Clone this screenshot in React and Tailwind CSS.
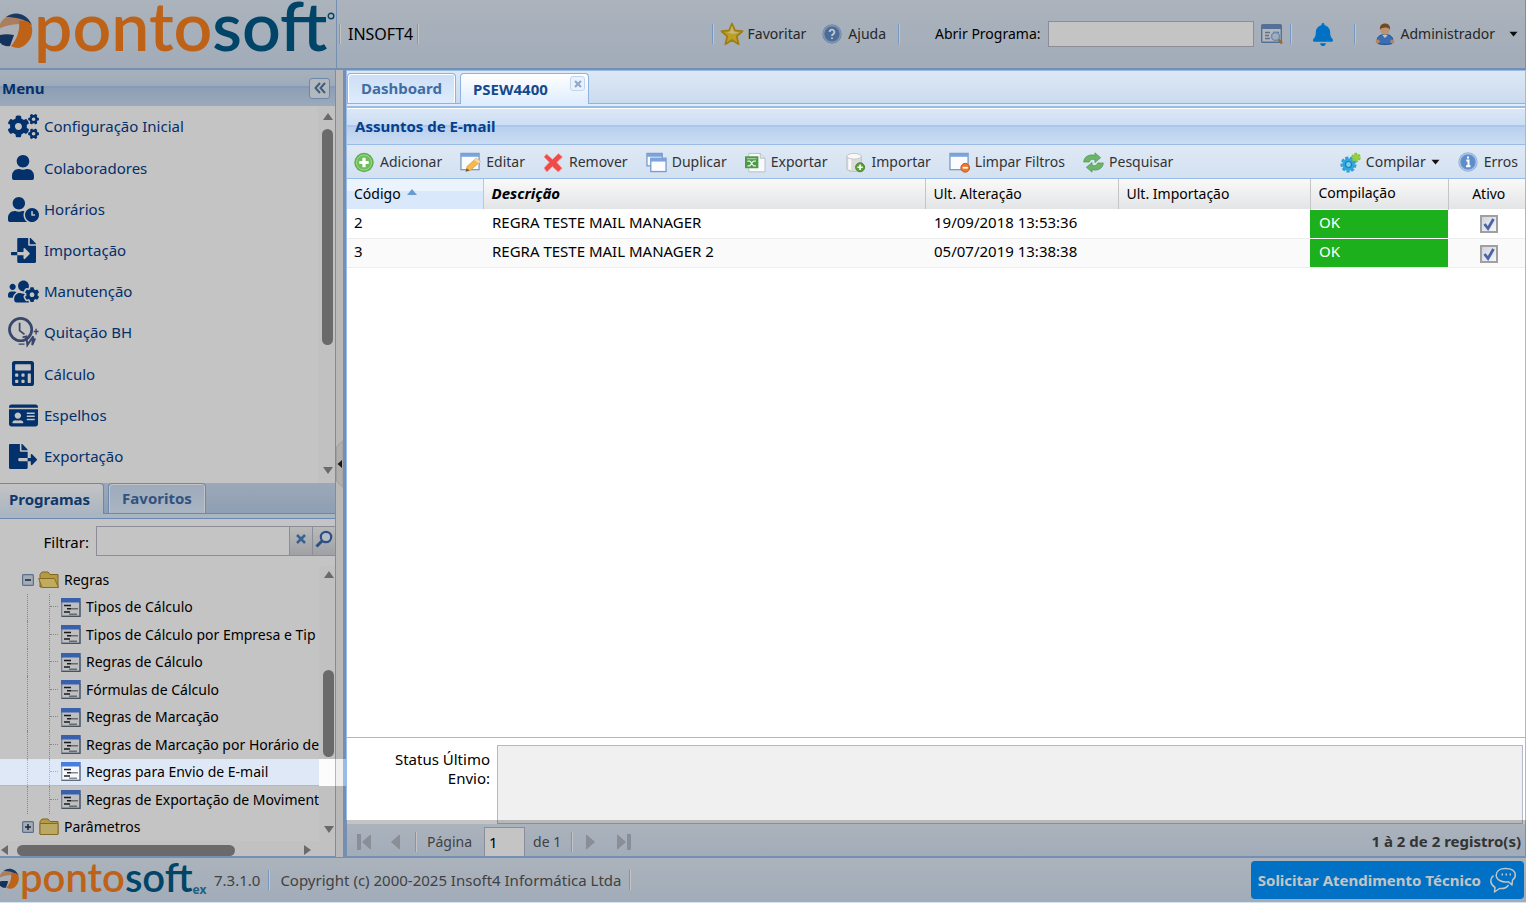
import { FaBell, FaCalculator, FaCogs, FaFileExport, FaFileImport, FaIdCard, FaUser, FaUserClock, FaUsersCog } from "react-icons/fa";

/* ---------- brand ---------- */

function Ball({ className }) {
  return (
    <svg viewBox="0 0 34 38" className={className} aria-hidden="true">
      <ellipse cx="14" cy="19" rx="17.500" ry="18" fill="#dfe4ec" />
      <path d="M-2 17C0 9 6 4 12 3c9-1 17 3 19 10C21 11 9 12-2 17z" fill="#dfa67a" />
      <path d="M6 5C14-1 26 0 32 13 25 7 15 5 6 5z" fill="#234a80" />
      <path d="M19 9c5-1 10 0 12 3 4 10-2 21-12 24-4 0-6-1-8-2 6-7 9-15 8-25z" fill="#f7801f" />
      <path d="M-3 24c5-2 11-2 17-1l-4 11C4 35-1 32-3 24z" fill="#1c4279" />
    </svg>
  );
}

/* ---------- menu icons ---------- */

function ClockSign({ className }) {
  return (
    <svg viewBox="0 0 32 32" className={className} fill="none" stroke="#4a5c8c" aria-hidden="true">
      <circle cx="13" cy="13" r="11.500" strokeWidth="2.800" />
      <path d="M12 6v8l5 4" strokeWidth="1.800" />
      <path d="M15 21l4-1 1 9 6-9-1 9 3-7" strokeWidth="2" />
      <path d="M11 28h6M29 12v6M26.500 15h5" strokeWidth="1.400" />
    </svg>
  );
}

/* ---------- coloured icons ---------- */

function Star() {
  return (
    <svg viewBox="0 0 24 24" className="size-6" aria-hidden="true">
      <path d="M12 1.500l3 7 7.500.700-5.700 5 1.800 8L12 18l-6.600 4.200 1.800-8-5.700-5L9 8.500z" fill="#f6cf2e" stroke="#cfa41c" strokeWidth="1.800" strokeLinejoin="round" />
      <path d="M12 4l2 5.500 5 .700-6 2-6-2 3-.700z" fill="#fdf0a0" />
    </svg>
  );
}

function RoundBadge({ glyph }) {
  return (
    <svg viewBox="0 0 20 20" className="size-5" aria-hidden="true">
      <circle cx="10" cy="10" r="9.700" fill="#8fb0dc" />
      <circle cx="10" cy="10" r="8.300" fill="#6c97cf" stroke="#bdd3ee" strokeWidth=".9" />
      <circle cx="10" cy="10" r="6.800" fill="#5f8dc8" />
      {glyph === "help" ? (
        <path d="M7.600 8a2.400 2.400 0 1 1 3.600 2.100c-.900.500-1.200.900-1.200 1.900M10 13.500v1.600" fill="none" stroke="#fff" strokeWidth="1.900" />
      ) : (
        <path d="M10 4.500v2M8.300 8.500H10.500V14M8 14.300h4.500" fill="none" stroke="#fff" strokeWidth="2" />
      )}
    </svg>
  );
}

function WindowSearch() {
  return (
    <svg viewBox="0 0 23 22" className="h-[22px] w-[23px]" aria-hidden="true">
      <rect x=".7" y="1.700" width="19.600" height="17.600" rx="1" fill="#e9f0f9" stroke="#6d94c4" strokeWidth="1.400" />
      <path d="M1 2h19v4H1z" fill="#6d94c4" />
      <path d="M4 9.500h5M4 12.500h4M4 15.500h5M12 9.500h6" stroke="#7d93b0" strokeWidth="1.300" />
      <circle cx="14.500" cy="13.500" r="4" fill="#cfe3f8" stroke="#8fb4e0" strokeWidth="1.500" />
      <path d="M17.500 16.500l3.500 4" stroke="#c08a4c" strokeWidth="2.400" />
    </svg>
  );
}

function Person() {
  return (
    <svg viewBox="0 0 20 22" className="h-[22px] w-5" aria-hidden="true">
      <path d="M3 20.500C.500 15 4 11.500 10 11.500s9.500 3.500 7 9c-2.500 1.200-11.500 1.200-14 0z" fill="#4b8fe8" stroke="#2a62b8" />
      <path d="M7 11.800L10 15l3-3.200z" fill="#fff" />
      <circle cx="2.700" cy="18.500" r="2" fill="#eab083" />
      <circle cx="17.300" cy="18.500" r="2" fill="#eab083" />
      <circle cx="10" cy="7" r="4.700" fill="#f3c197" />
      <path d="M5 7C4.300 2.500 7 .500 10 .500S15.700 2.500 15 7C14 4.800 12 4.300 9 4.800 7 4.800 5.500 5.500 5 7z" fill="#96602f" />
    </svg>
  );
}

function AddIcon() {
  return (
    <svg viewBox="0 0 21 21" className="size-[21px]" aria-hidden="true">
      <circle cx="10" cy="10.500" r="9.700" fill="#5fae4e" />
      <circle cx="10" cy="10.500" r="7.600" fill="#6dbd5b" stroke="#a9dc9c" />
      <path d="M10 5.800v9.400M5.300 10.500h9.400" stroke="#fff" strokeWidth="3.200" />
    </svg>
  );
}

function WindowFrame({ x = 1, y = 1, w = 19, h = 17 }) {
  return (
    <g>
      <rect x={x} y={y} width={w} height={h} fill="#fafcff" stroke="#7b9ccb" strokeWidth="1.400" />
      <rect x={x} y={y} width={w} height="3.500" fill="#7ba3dc" />
    </g>
  );
}

function EditIcon() {
  return (
    <svg viewBox="0 0 22 21" className="h-[21px] w-[22px]" aria-hidden="true">
      <WindowFrame />
      <path d="M6 20l1.500-5.500L17 6l4.500 3.500L11 18.500z" fill="#f5b94c" stroke="#dca044" strokeWidth=".8" />
      <path d="M17 6l4.500 3.500-2 2-4.500-3.500z" fill="#f8d9a0" />
      <path d="M6 20l1-3.500 3 2.300z" fill="#6b5640" />
    </svg>
  );
}

function RemoveIcon() {
  return (
    <svg viewBox="0 0 21 21" className="size-[21px]" aria-hidden="true">
      <path d="M3.500 2l6 5.300L15.500 1.500l4 3.500-5.700 5.300 5.200 6-3.700 3.700-6-5.500-5.500 5.500L1 16l5.300-5.700L1 5z" fill="#ef4b48" stroke="#f79a94" strokeWidth=".8" />
    </svg>
  );
}

function DuplicateIcon() {
  return (
    <svg viewBox="0 0 22 21" className="h-[21px] w-[22px]" aria-hidden="true">
      <WindowFrame x={1} y={1} w={16} h={13} />
      <WindowFrame x={5} y={6} w={16} h={14} />
    </svg>
  );
}

function ExcelIcon() {
  return (
    <svg viewBox="0 0 22 21" className="h-[21px] w-[22px]" aria-hidden="true">
      <path d="M4 1h12l5 5v14.300H4z" fill="#f8f9fa" stroke="#b9bec6" />
      <path d="M16 1v5h5" fill="#e4e7eb" stroke="#b9bec6" />
      <rect x="0" y="4" width="14" height="12.500" fill="#4b9a45" />
      <path d="M2 6.500h10" stroke="#a8d49f" strokeWidth="1.200" />
      <path d="M2.500 9h2.500l2 2 2-2h2.500M2.500 14h2.500l2-2.500L9 14h2.500" fill="none" stroke="#e2f3de" strokeWidth="1.400" />
    </svg>
  );
}

function DatabaseAddIcon() {
  return (
    <svg viewBox="0 0 22 21" className="h-[21px] w-[22px]" aria-hidden="true">
      <path d="M2 4v13c0 4 15 4 15 0V4z" fill="#dcdcdc" stroke="#bdbdbd" />
      <path d="M5 6v12" stroke="#fafafa" strokeWidth="3" />
      <ellipse cx="9.500" cy="4" rx="7.500" ry="3" fill="#f8f8f8" stroke="#c4c4c4" />
      <circle cx="15.800" cy="15.500" r="4.700" fill="#5d9f3b" stroke="#47822b" />
      <path d="M15.800 12.700v5.600M13 15.500h5.600" stroke="#fff" strokeWidth="1.700" />
    </svg>
  );
}

function ClearFilterIcon() {
  return (
    <svg viewBox="0 0 22 21" className="h-[21px] w-[22px]" aria-hidden="true">
      <WindowFrame />
      <circle cx="17" cy="16" r="4.600" fill="#ec7a2c" stroke="#c4551a" />
      <path d="M14.300 16h5.400" stroke="#fff" strokeWidth="1.800" />
    </svg>
  );
}

function RefreshIcon() {
  return (
    <svg viewBox="0 0 22 21" className="h-[21px] w-[22px]" fill="#6bb56a" stroke="#4b944c" strokeWidth=".7" aria-hidden="true">
      <path d="M.7 10C1 4 7 1.500 12.500 3V.400L18.500 5.500l-6 5V7.500C9.500 6.500 7.500 7.500 6.500 10z" />
      <path d="M21.300 11c-.300 6-6.300 8.500-11.800 7V20.600L3.500 15.500l6-5v3c3 1 5 0 6-2.500z" />
    </svg>
  );
}

function GearsIcon() {
  return (
    <svg viewBox="0 0 21 21" className="size-[21px]" aria-hidden="true">
      <circle cx="8.500" cy="12.500" r="6.300" fill="#2fa5dd" />
      <circle cx="8.500" cy="12.500" r="7" fill="none" stroke="#2b9bd4" strokeWidth="2" strokeDasharray="3.200 1.700" />
      <circle cx="8.500" cy="12.500" r="3" fill="#6fd0f2" stroke="#1a7db5" strokeWidth="1.200" />
      <circle cx="16" cy="5.500" r="3.400" fill="#96cf3e" />
      <circle cx="16" cy="5.500" r="3.900" fill="none" stroke="#86c435" strokeWidth="1.800" strokeDasharray="2.600 1.480" />
    </svg>
  );
}

function Caret() {
  return (
    <svg viewBox="0 0 9 6" className="h-1.5 w-[9px]" aria-hidden="true">
      <path d="M.5.700h8L4.500 5.500z" fill="#111" />
    </svg>
  );
}

function ChatIcon() {
  return (
    <svg viewBox="0 0 28 26" className="h-[26px] w-7" fill="none" stroke="#fff" strokeWidth="1.500" strokeLinejoin="round" aria-hidden="true">
      <path d="M16.500 1.500c6 0 9.800 2.500 9.800 6.500 0 2.300-1 3.800-2.800 5l-.5 5-3.500-3.300c-7 1-12.300-2-12.300-6.700 0-4 3.800-6.500 9.300-6.500z" />
      <path d="M4.500 8.500C.500 12 1 17.500 6 20.500L5.500 25l5-3.500c4 .500 7-.500 9-3.500" />
      <path d="M12.500 7.500h1.500M16.500 7.500H18M20.500 7.500H22" strokeWidth="2" />
    </svg>
  );
}

function LeafIcon() {
  return (
    <svg viewBox="0 0 20 19" className="h-[19px] w-5 shrink-0" aria-hidden="true">
      <rect x=".7" y=".7" width="18.300" height="17.300" fill="#f6f9fd" stroke="#93a1b6" strokeWidth="1.200" />
      <path d="M0 0h19.500v4.500H0z" fill="#4a7de0" />
      <path d="M19 4v14.500H.500" fill="none" stroke="#5e6c80" strokeWidth="1.200" />
      <path d="M3 7.500h7M6 10.700h4M3 14h6" stroke="#222" strokeWidth="1.600" />
      <path d="M10 10.700h7M8 16.300h8" stroke="#8a8a8a" strokeWidth="1.400" />
    </svg>
  );
}

function FolderIcon({ open }) {
  return (
    <svg viewBox="0 0 22 18" className="h-[18px] w-[22px] shrink-0" aria-hidden="true">
      <path d="M2 16V3.500L4 1h6l2 2.500h8V16z" fill="#ecc95a" stroke="#a8842a" />
      {open ? (
        <path d="M.7 7.500h15.800l4 9H4z" fill="#fbe07a" stroke="#b08c2c" />
      ) : (
        <path d="M2 5.500h18v11H2z" fill="#f3dc83" stroke="#b08c2c" />
      )}
    </svg>
  );
}

function ToggleIcon({ open }) {
  return (
    <svg viewBox="0 0 12 12" className="size-3" aria-hidden="true">
      <rect x=".6" y=".6" width="10.800" height="10.800" rx="1" fill="#d5e0ef" stroke="#7790b4" strokeWidth="1.200" />
      <path d={open ? "M3 6h6" : "M3 6h6M6 3v6"} stroke="#1d2f4a" strokeWidth="1.500" />
    </svg>
  );
}

function Triangle({ dir }) {
  const d = { up: "M5 1l5 7H0z", down: "M5 8l5-7H0z", left: "M1 5l7-5v10z", right: "M8 5L1 0v10z" }[dir];
  return (
    <svg viewBox="0 0 10 10" className="size-2.5 shrink-0" aria-hidden="true">
      <path d={d} fill="#8b8b8b" />
    </svg>
  );
}

/* ---------- data ---------- */

const MENU = [
  ["Configuração Inicial", FaCogs, "h-[25px] w-[31px]"],
  ["Colaboradores", FaUser, "h-[25px] w-[22px]"],
  ["Horários", FaUserClock, "h-[25px] w-[31px]"],
  ["Importação", FaFileImport, "h-[25px] w-[25px]"],
  ["Manutenção", FaUsersCog, "h-[25px] w-[31px]"],
  ["Quitação BH", ClockSign, "h-[31px] w-[31px]"],
  ["Cálculo", FaCalculator, "h-[25px] w-[22px]"],
  ["Espelhos", FaIdCard, "h-[25px] w-[29px]"],
  ["Exportação", FaFileExport, "h-[25px] w-[28px]"],
];

const SELECTED = "Regras para Envio de E-mail";

const LEAVES = [
  "Tipos de Cálculo",
  "Tipos de Cálculo por Empresa e Tip",
  "Regras de Cálculo",
  "Fórmulas de Cálculo",
  "Regras de Marcação",
  "Regras de Marcação por Horário de",
  SELECTED,
  "Regras de Exportação de Moviment",
];

const ROWS = [
  ["2", "REGRA TESTE MAIL MANAGER", "19/09/2018 13:53:36"],
  ["3", "REGRA TESTE MAIL MANAGER 2", "05/07/2019 13:38:38"],
];

const ACTIONS = [
  ["Adicionar", AddIcon],
  ["Editar", EditIcon],
  ["Remover", RemoveIcon],
  ["Duplicar", DuplicateIcon],
  ["Exportar", ExcelIcon],
  ["Importar", DatabaseAddIcon],
  ["Limpar Filtros", ClearFilterIcon],
  ["Pesquisar", RefreshIcon],
];

const BOLD = "text-[15px] font-bold";
const HEADER_BG =
  "bg-[linear-gradient(to_bottom,#dae7f6,#cddef3_45%,#abc7ec_46%,#abc7ec_50%,#b8cfee_51%,#cbddf3)]";
const BAR_BG = "bg-linear-to-b from-[#dfe9f5] to-[#d3e1f1]";

function Sep() {
  return <span className="h-5 w-0.5 shrink-0 border-r border-l border-r-white border-l-[#98c8ff]" />;
}

function ToolButton({ icon: Icon, label, menu }) {
  return (
    <button type="button" className="flex items-center gap-[5px] text-sm whitespace-nowrap text-[#333]">
      <span className="flex w-[21px]"><Icon /></span>
      {label}
      {menu && <Caret />}
    </button>
  );
}

/* ---------- regions ---------- */

function TopBar() {
  return (
    <header className={`flex h-[70px] shrink-0 border-b-2 border-[#99bbe8] ${BAR_BG}`}>
      <div className="flex w-[337px] shrink-0 items-start border-r border-[#99bbe8]">
        <Ball className="mt-3 h-[38px] w-[34px] shrink-0" />
        <span className="font-['Lato',sans-serif] text-[68px] leading-[50px] font-semibold whitespace-nowrap text-[#f7801f]">
          ponto<span className="text-[#005a88]">soft</span>
        </span>
        <svg viewBox="0 0 8 8" className="mt-3 size-2 shrink-0" aria-hidden="true">
          <circle cx="4" cy="4" r="2.800" fill="none" stroke="#005a88" strokeWidth="1.400" />
        </svg>
      </div>
      <div className="flex flex-1 items-center border-r border-[#99bbe8] pr-[7px] text-sm">
        <div className="flex flex-1 items-center gap-1 pl-0.5">
          <Sep />
          <span className="pl-[3px] text-base text-black">INSOFT4</span>
          <Sep />
        </div>
        <Sep />
        <button type="button" className="ml-1.5 flex items-center gap-1 text-[#333]">
          <Star />Favoritar
        </button>
        <button type="button" className="mr-3 ml-4 flex items-center gap-1.5 text-[#333]">
          <RoundBadge glyph="help" />Ajuda
        </button>
        <Sep />
        <label htmlFor="open" className="ml-[35px] text-black">Abrir Programa:</label>
        <input id="open" className="mx-[7px] h-[26px] w-[206px] border border-[#b5b8c8] bg-white px-1" />
        <button type="button" aria-label="Pesquisar programa" className="mr-1.5"><WindowSearch /></button>
        <Sep />
        <button type="button" aria-label="Notificações" className="mx-5"><FaBell className="h-[23px] w-[22px] text-[#0093ff]" /></button>
        <Sep />
        <button type="button" className="ml-[19px] flex items-center gap-1.5 text-[#333]">
          <Person />Administrador<span className="ml-2"><Caret /></span>
        </button>
      </div>
    </header>
  );
}

function Menu() {
  return (
    <section className="flex min-h-0 flex-1 flex-col">
      <h2 className={`flex h-9 shrink-0 items-center justify-between pr-[5px] pl-0.5 text-[#04408c] ${HEADER_BG} ${BOLD}`}>
        Menu
        <button type="button" aria-label="Recolher menu" className="flex size-[21px] items-center justify-center rounded-[3px] border border-[#8fb0dc] bg-[#e8f0fa]">
          <svg viewBox="0 0 12 12" className="size-3" fill="none" stroke="#54789f" strokeWidth="2" aria-hidden="true">
            <path d="M6 1L1.500 6 6 11M11 1L6.500 6 11 11" />
          </svg>
        </button>
      </h2>
      <div className="flex min-h-0 flex-1 bg-white">
        <ul className="grid flex-1 grid-rows-9 pb-1.5 text-[15px] text-[#04408c]">
          {MENU.map(([label, Icon, size]) => (
            <li key={label} className="flex">
              <a href="#menu" className="flex items-center gap-[5px] pl-[7px]">
                <span className="flex w-8 justify-center"><Icon className={size} preserveAspectRatio="none" /></span>
                {label}
              </a>
            </li>
          ))}
        </ul>
        <div className="flex w-[17px] flex-col items-end bg-[#fcfcfc] pt-1.5 pr-0.5 pb-[7px]">
          <Triangle dir="up" />
          <div className="mt-[7px] h-[216px] w-[11px] rounded-full bg-[#8b8b8b]" />
          <div className="mt-auto"><Triangle dir="down" /></div>
        </div>
      </div>
    </section>
  );
}

function Programs() {
  return (
    <section className="flex shrink-0 flex-col bg-white">
      <div className="flex h-[31px] items-end gap-1 border-b border-[#8db2e3] bg-linear-to-b from-[#cbdbef] to-[#b9cfe9]" role="tablist">
        <button type="button" role="tab" aria-selected="true" className={`-mb-px h-[31px] w-[104px] rounded-tr border-t border-r border-[#8db2e3] bg-linear-to-b from-white to-[#deecfd] pr-1 text-[#15498b] ${BOLD}`}>Programas</button>
        <button type="button" role="tab" aria-selected="false" className={`h-[30px] w-[98px] rounded-t border border-b-0 border-[#8db2e3] bg-linear-to-b from-[#ccdef6] to-[#deecfd] text-[#416da3] shadow-[inset_1px_1px_0_#fff,inset_-1px_0_0_#fff] ${BOLD}`}>Favoritos</button>
      </div>
      <div className="h-[5px] border-b border-[#8db2e3] bg-[#deecfd]" />
      <div className="flex h-[47px] pt-[7px]">
        <label htmlFor="filter" className="w-[89px] self-start pt-1 text-right text-[15px] leading-6 text-black">Filtrar:</label>
        <input id="filter" className="ml-[7px] h-[30px] min-w-0 flex-1 border border-[#b5b8c8] bg-white px-1" />
        <button type="button" aria-label="Limpar" className="flex h-[30px] w-[22px] items-center justify-center border-y border-[#b5b8c8] bg-linear-to-b from-[#f2f2f2] to-[#cfd2d8]">
          <svg viewBox="0 0 10 10" className="mb-1 size-2.5" stroke="#4b7fbf" strokeWidth="2.500" aria-hidden="true"><path d="M1 1l8 8M9 1L1 9" /></svg>
        </button>
        <button type="button" aria-label="Filtrar" className="flex h-[30px] w-[23px] items-center justify-center border border-r-0 border-[#b5b8c8] bg-linear-to-b from-[#f2f2f2] to-[#cfd2d8]">
          <svg viewBox="0 0 18 18" className="mb-1 size-[18px]" fill="none" stroke="#3a69ad" aria-hidden="true">
            <circle cx="11" cy="7" r="5.200" strokeWidth="2.200" fill="#eef5fd" /><path d="M7 11l-5.500 5.500" strokeWidth="3" />
          </svg>
        </button>
      </div>
      <div className="flex">
        <ul className="grid h-[275px] min-w-0 flex-1 grid-rows-10 text-sm text-black">
          <li className="flex items-center whitespace-nowrap">
            <button type="button" aria-label="Recolher" className="ml-[22px] w-4"><ToggleIcon open /></button>
            <FolderIcon open /><span className="ml-1">Regras</span>
          </li>
          {LEAVES.map((name) => (
            <li key={name} className={name === SELECTED ? "border-b border-[#a3bae9] bg-[#dfe8f6]" : ""}>
              <a href="#programa" className="flex h-full items-center whitespace-nowrap">
                <span className="ml-[27px] h-full w-[22px] shrink-0 border-l border-dotted border-[#b0b0b0]" />
                <span className="h-full w-3 shrink-0 border-l border-dotted border-[#b0b0b0]">
                  <span className="block h-1/2 w-2 border-b border-dotted border-[#b0b0b0]" />
                </span>
                <LeafIcon /><span className="ml-[5px]">{name}</span>
              </a>
            </li>
          ))}
          <li className="flex items-center whitespace-nowrap">
            <button type="button" aria-label="Expandir" className="ml-[22px] w-4"><ToggleIcon /></button>
            <FolderIcon /><span className="ml-1">Parâmetros</span>
          </li>
        </ul>
        <div className="flex w-4 flex-col items-end bg-[#fcfcfc] pt-1 pr-px pb-1.5">
          <Triangle dir="up" />
          <div className="mt-[90px] h-[87px] w-[11px] rounded-full bg-[#8b8b8b]" />
          <div className="mt-auto"><Triangle dir="down" /></div>
        </div>
      </div>
      <div className="flex h-4 items-center border-b border-[#99bbe8] bg-[#fcfcfc] pt-[3px] pr-[22px]">
        <Triangle dir="left" />
        <div className="ml-[7px] h-[11px] w-[218px] rounded-full bg-[#8b8b8b]" />
        <div className="ml-auto"><Triangle dir="right" /></div>
      </div>
    </section>
  );
}

function Grid() {
  const th = "border-r border-[#c5c5c5] bg-linear-to-b from-[#f9f9f9] to-[#e3e4e6] pb-px pl-2 text-left font-normal";
  const td = "pb-0.5 pl-[9px]";
  return (
    <table className="w-full table-fixed border-collapse text-[15px] text-black">
      <colgroup>
        <col className="w-[136px]" /><col /><col className="w-[193px]" /><col className="w-[192px]" /><col className="w-[138px]" /><col className="w-[77px]" />
      </colgroup>
      <thead>
        <tr className="h-[30px]">
          <th className="border-r border-[#c5c5c5] bg-[linear-gradient(to_bottom,#ebf3fd_40%,#d9e8fb_41%)] pb-px pl-[7px] text-left text-sm font-normal">
            <span className="flex items-center gap-1.5">
              Código
              <svg viewBox="0 0 10 6" className="mb-1 h-1.5 w-2.5" aria-hidden="true"><path d="M5 0l5 6H0z" fill="#6a9ad4" /></svg>
            </span>
          </th>
          <th className={th}><span className={`italic ${BOLD}`}>Descrição</span></th>
          <th className={`text-sm ${th}`}>Ult. Alteração</th>
          <th className={`text-sm ${th}`}>Ult. Importação</th>
          <th className={`text-sm ${th}`}>Compilação</th>
          <th className="bg-linear-to-b from-[#f9f9f9] to-[#e3e4e6] pb-px pl-1 text-center text-sm font-normal">Ativo</th>
        </tr>
      </thead>
      <tbody>
        {ROWS.map(([id, name, date]) => (
          <tr key={id} className="h-[29px] border-b border-[#ededed] even:bg-[#fafafa]">
            <td className="pb-0.5 pl-[7px]">{id}</td>
            <td className={td}>{name}</td>
            <td className={td}>{date}</td>
            <td />
            <td className="border-t border-t-white bg-[#1cb01c] pb-0.5 pl-[9px] text-white">OK</td>
            <td className="pt-0.5 pl-1">
              <label className="grid items-center justify-center">
                <input type="checkbox" defaultChecked aria-label={`Ativo ${id}`} className="peer col-start-1 row-start-1 size-[18px] appearance-none border-2 border-[#a0a0a0] bg-linear-to-br from-[#d0d4dc] to-[#f6f7f9]" />
                <svg viewBox="0 0 18 18" className="pointer-events-none invisible col-start-1 row-start-1 size-[18px] peer-checked:visible" aria-hidden="true">
                  <path d="M4.500 9l3.500 4.500 5.500-9.500" fill="none" stroke="#4a63a8" strokeWidth="2.800" />
                </svg>
              </label>
            </td>
          </tr>
        ))}
      </tbody>
    </table>
  );
}

function PageArrow({ label, dir, bar }) {
  return (
    <button type="button" aria-label={label} className="flex w-[15px] items-center justify-center">
      <svg viewBox="0 0 15 16" className="h-4 w-[15px]" fill="#b4bac4" stroke="#a3abb8" strokeWidth=".6" aria-hidden="true">
        {bar && <rect x={dir === "left" ? 0.5 : 11.5} y=".5" width="3" height="15" />}
        <path d={dir === "left" ? "M13.500 1v14L5.500 8z" : "M1.500 1v14L9.500 8z"} />
      </svg>
    </button>
  );
}

function Workspace() {
  return (
    <main className="flex min-w-0 flex-1 flex-col border-t border-r border-l-4 border-[#99bbe8] bg-white">
      <div className="flex h-[33px] shrink-0 items-end gap-1 border-b border-[#8db2e3] bg-linear-to-b from-[#dde8f5] to-[#cbdbef]" role="tablist">
        <button type="button" role="tab" aria-selected="false" className={`h-[30px] w-[109px] rounded-t border border-b-0 border-[#8db2e3] bg-linear-to-b from-[#ccdef6] to-[#deecfd] text-[#416da3] shadow-[inset_1px_1px_0_#fff,inset_-1px_0_0_#fff] ${BOLD}`}>Dashboard</button>
        <div className="-mb-px flex h-[31px] w-[129px] items-start justify-between rounded-t border border-b-0 border-[#8db2e3] bg-linear-to-b from-white to-[#deecfd] pr-[3px] pl-3">
          <button type="button" role="tab" aria-selected="true" className={`h-[30px] text-[#15498b] ${BOLD}`}>PSEW4400</button>
          <button type="button" aria-label="Fechar aba" className="mt-0.5 flex size-[15px] items-center justify-center rounded-[3px] border border-[#c3d5ee] bg-[#eaf2fc]">
            <svg viewBox="0 0 8 8" className="size-2" stroke="#8fa8cc" strokeWidth="2.200" aria-hidden="true"><path d="M1 1l6 6M7 1L1 7" /></svg>
          </button>
        </div>
      </div>
      <div className="h-1 shrink-0 border-b-2 border-[#99bbe8] bg-[#deecfd]" />
      <h1 className={`flex h-[37px] shrink-0 items-center border-t border-b border-t-white border-b-[#99bbe8] pb-px pl-2 text-[#04408c] ${HEADER_BG} ${BOLD}`}>Assuntos de E-mail</h1>
      <div className={`flex h-[34px] shrink-0 items-center gap-[18px] border-b border-[#99bbe8] px-[7px] pt-px ${BAR_BG}`}>
        {ACTIONS.map(([label, icon]) => <ToolButton key={label} label={label} icon={icon} />)}
        <span className="flex-1" />
        <ToolButton label="Compilar" icon={GearsIcon} menu />
        <ToolButton label="Erros" icon={() => <RoundBadge glyph="info" />} />
      </div>
      <div className="min-h-0 flex-1"><Grid /></div>
      <div className="flex h-[87px] shrink-0 border-t border-[#99bbe8] pt-[7px] pr-0.5">
        <label htmlFor="status" className="w-[143px] shrink-0 pt-[5px] pl-8 text-right text-[15px] leading-[19px] text-black">Status Último Envio:</label>
        <textarea id="status" readOnly className="ml-[7px] h-[79px] min-w-0 flex-1 resize-none border border-[#b5b8c8] bg-[#f0f0f0]" />
      </div>
      <div className={`flex h-[33px] shrink-0 items-center border-b border-[#99bbe8] pt-1 pr-1 pl-2.5 text-sm text-[#555] ${BAR_BG}`}>
        <PageArrow label="Primeira página" dir="left" bar />
        <span className="w-3.5" />
        <PageArrow label="Página anterior" dir="left" />
        <span className="w-3.5" />
        <Sep />
        <label htmlFor="page" className="mr-3 ml-2.5">Página</label>
        <input id="page" defaultValue="1" className="h-[29px] w-[41px] self-end border border-b-0 border-[#b5b8c8] bg-white px-1 text-[15px] text-black" />
        <span className="mr-2.5 ml-2">de 1</span>
        <Sep />
        <span className="w-3" />
        <PageArrow label="Próxima página" dir="right" />
        <span className="w-4" />
        <PageArrow label="Última página" dir="right" bar />
        <span className={`ml-auto text-[#444] ${BOLD}`}>1 à 2 de 2 registro(s)</span>
      </div>
    </main>
  );
}

function Footer() {
  return (
    <footer className={`flex h-[46px] shrink-0 items-center border-t border-[#99bbe8] pr-0.5 pb-px text-[15px] text-[#555] ${BAR_BG}`}>
      <div className="flex h-11 w-[208px] items-start">
        <Ball className="mt-2.5 h-[22px] w-5 shrink-0" />
        <span className="font-['Lato',sans-serif] text-[40px] leading-[38px] font-semibold whitespace-nowrap text-[#f7801f]">
          ponto<span className="text-[#005a88]">soft</span>
        </span>
        <span className="mt-6 text-xs font-bold text-[#2b7cab]">ex</span>
      </div>
      <span className="ml-1.5">7.3.1.0</span>
      <span className="w-2" /><Sep /><span className="w-2.5" />
      <span>Copyright (c) 2000-2025 Insoft4 Informática Ltda</span>
      <span className="w-2" /><Sep />
      <button type="button" className={`ml-auto flex h-[38px] items-center gap-2 rounded bg-[#0093ff] px-[7px] text-white ${BOLD}`}>
        Solicitar Atendimento Técnico<ChatIcon />
      </button>
    </footer>
  );
}

/* Tour veil: shades everything but the selected program and the workspace. */
function Veil() {
  return (
    <div className="pointer-events-none absolute inset-0 flex flex-col" aria-hidden="true">
      <div className="h-[70px] bg-black/23" />
      <div className="flex flex-1">
        <div className="flex w-[346px] flex-col">
          <div className="flex-1 bg-black/23" />
          <div className="h-[27px]" />
          <div className="h-[34px] bg-black/23" />
        </div>
      </div>
      <div className="h-[82px] bg-black/23" />
      <div className="h-px" />
    </div>
  );
}

export default function App() {
  return (
    <div className="relative flex h-screen flex-col overflow-hidden bg-white font-['Noto_Sans',sans-serif] text-[15px]">
      <TopBar />
      <div className="flex min-h-0 flex-1">
        <aside className="flex w-[336px] shrink-0 flex-col border-r border-[#99bbe8]">
          <Menu />
          <Programs />
        </aside>
        <div className="flex w-[7px] shrink-0 items-center bg-[#f0f0f0]">
          <button type="button" aria-label="Recolher painel" className="flex">
            <svg viewBox="0 0 7 48" className="h-12 w-[7px]" aria-hidden="true">
              <path d="M7 .500L.500 7v34L7 47.500z" fill="#e4e4e4" stroke="#cfcfcf" /><path d="M6 20v8L1.500 24z" fill="#222" />
            </svg>
          </button>
        </div>
        <Workspace />
      </div>
      <Footer />
      <Veil />
    </div>
  );
}
